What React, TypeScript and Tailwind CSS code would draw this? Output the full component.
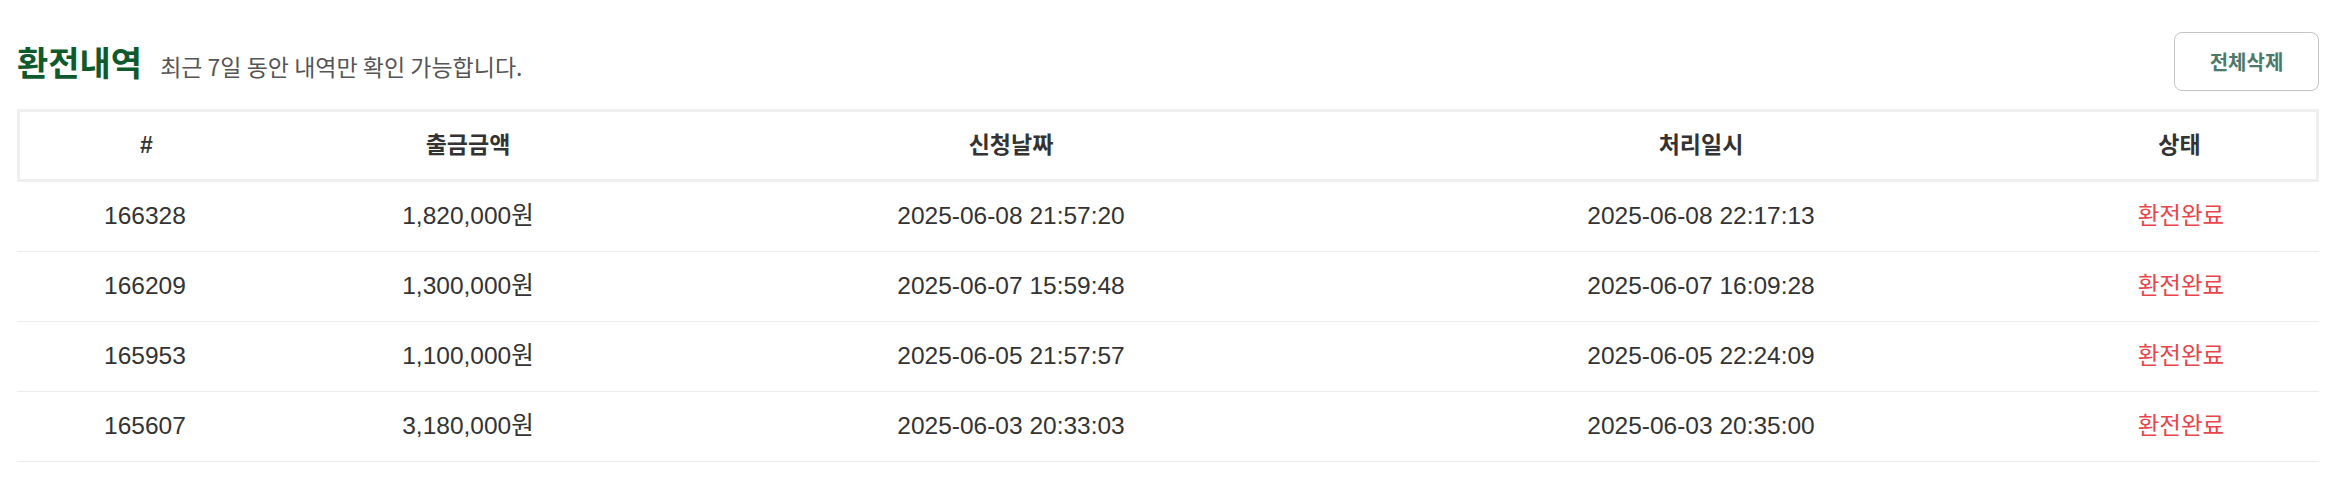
const rows = [
  { id: "166328", amount: "1,820,000원", requested: "2025-06-08 21:57:20", processed: "2025-06-08 22:17:13" },
  { id: "166209", amount: "1,300,000원", requested: "2025-06-07 15:59:48", processed: "2025-06-07 16:09:28" },
  { id: "165953", amount: "1,100,000원", requested: "2025-06-05 21:57:57", processed: "2025-06-05 22:24:09" },
  { id: "165607", amount: "3,180,000원", requested: "2025-06-03 20:33:03", processed: "2025-06-03 20:35:00" },
];

const font = "font-['Liberation_Sans','Noto_Sans_CJK_KR',sans-serif]";

export default function App() {
  return (
    <div className={`w-[2348px] h-[491px] bg-white pl-[17px] pr-[29px] ${font}`}>
      {/* Title bar */}
      <div className="flex items-center justify-between pt-[32px]">
        <div className="flex items-baseline gap-[18px] font-['Noto_Sans_CJK_KR',sans-serif]">
          <h2 className="text-[34px] font-bold text-[#0f5a2c]">환전내역</h2>
          <p className="text-[23px] text-[#555]">최근 7일 동안 내역만 확인 가능합니다.</p>
        </div>
        <button className="h-[59px] w-[145px] rounded-[8px] border border-[#c4c4c4] bg-white text-[20px] font-bold text-[#4b7a6a] font-['Noto_Sans_CJK_KR',sans-serif]">
          전체삭제
        </button>
      </div>

      {/* Table */}
      <div className="mt-[18px]">
        <div className="grid h-[73px] grid-cols-[253px_390px_696px_684px_1fr] items-center border-[3px] border-[#efefef] text-[23px] font-bold text-[#333]">
          <div className="text-center">#</div>
          <div className="text-center">출금금액</div>
          <div className="text-center">신청날짜</div>
          <div className="text-center">처리일시</div>
          <div className="text-center">상태</div>
        </div>
        {rows.map((r) => (
          <div
            key={r.id}
            className="grid h-[70px] grid-cols-[256px_390px_696px_684px_1fr] items-center border-b border-[#ececec] text-[24.5px] text-[#333]"
          >
            <div className="text-center">{r.id}</div>
            <div className="text-center">{r.amount}</div>
            <div className="text-center">{r.requested}</div>
            <div className="text-center">{r.processed}</div>
            <div className="text-center text-[23.5px] text-[#e8454a]">환전완료</div>
          </div>
        ))}
      </div>
    </div>
  );
}
